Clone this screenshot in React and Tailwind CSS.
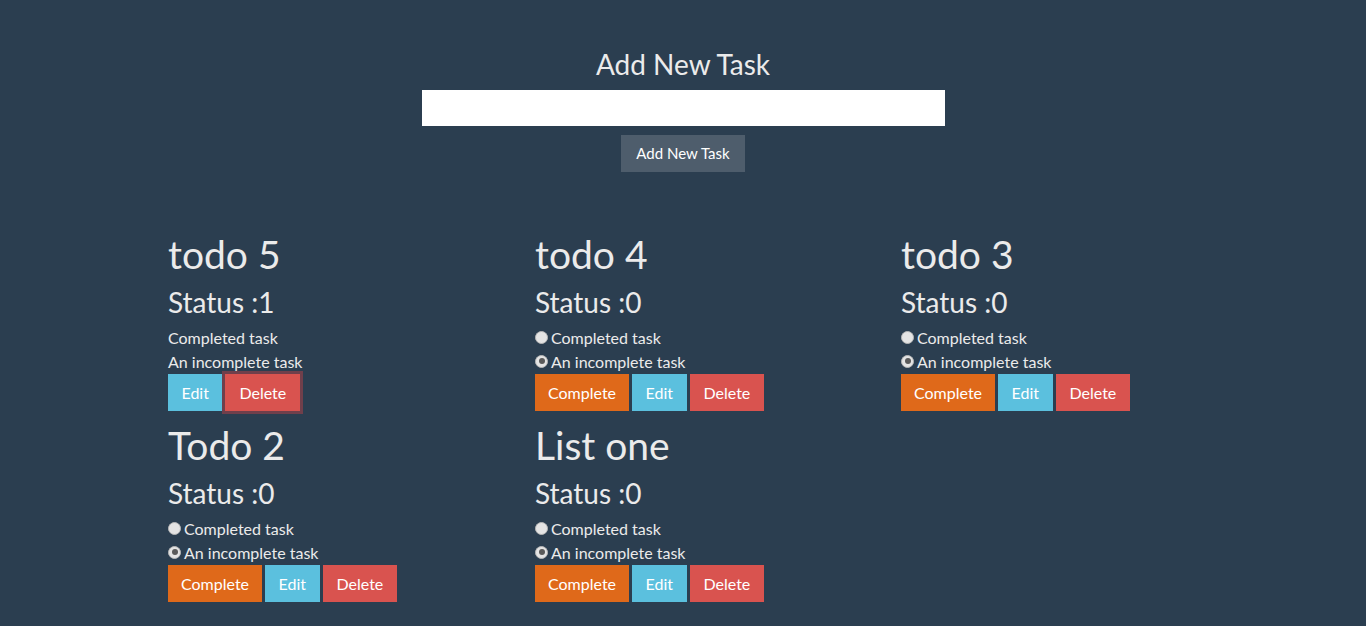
import React from 'react';

const tasks = [
  { id: 5, title: 'todo 5', status: 1 },
  { id: 4, title: 'todo 4', status: 0 },
  { id: 3, title: 'todo 3', status: 0 },
  { id: 2, title: 'Todo 2', status: 0 },
  { id: 1, title: 'List one', status: 0 },
];

const Radio = ({ checked }) => (
  <span className="inline-flex items-center justify-center w-[13px] h-[13px] rounded-full bg-[#e4e4e4] border border-[#b9b9b9] mr-[3px] translate-y-[-1px]">
    {checked && <span className="w-[6px] h-[6px] rounded-full bg-[#5a5a5a]" />}
  </span>
);

const TaskCard = ({ task }) => {
  const done = task.status === 1;
  return (
    <div className="mb-[13px]">
      <h1 className="text-[39px] leading-[43px] h-[43px]">{task.title}</h1>
      <h2 className="text-[28px] leading-[33px] h-[33px] mt-[10px]">Status :{task.status}</h2>
      <div className="mt-[7px] text-[16px]">
        <div className="h-[24px] leading-[24px] flex items-center">
          {!done && <Radio />}
          <span>Completed task</span>
        </div>
        <div className="h-[24px] leading-[24px] flex items-center">
          {!done && <Radio checked />}
          <span>An incomplete task</span>
        </div>
      </div>
      <div className="flex gap-[3px] h-[37px] text-[16px]">
        {!done && (
          <button className="bg-[#df691a] text-white px-[13px] h-[37px] leading-[21px]">Complete</button>
        )}
        <button className="bg-[#5bc0de] text-white px-[13.5px] h-[37px] leading-[21px]">Edit</button>
        <button
          className={`bg-[#d9534f] text-white px-[14px] h-[37px] leading-[21px] ${
            done ? 'outline-[3px] outline-solid outline-[#703f4b]' : ''
          }`}
        >
          Delete
        </button>
      </div>
    </div>
  );
};

export default function App() {
  return (
    <div className="min-h-[626px] bg-[#2b3e50] text-[#ebebeb] text-[15px] font-['Lato','Liberation_Sans',sans-serif]">
      <div className="flex flex-col items-center pt-[48px]">
        <h2 className="text-[28px] leading-[33px] h-[33px]">Add New Task</h2>
        <input type="text" className="mt-[9px] w-[523px] h-[36px] bg-white outline-none" />
        <button className="mt-[9px] bg-[#4e5d6c] text-white px-[15px] h-[37px] leading-[21px]">Add New Task</button>
      </div>
      <div className="grid grid-cols-[367px_366px_366px] pl-[168px] mt-[61px]">
        {tasks.map((task) => (
          <TaskCard key={task.id} task={task} />
        ))}
      </div>
    </div>
  );
}
